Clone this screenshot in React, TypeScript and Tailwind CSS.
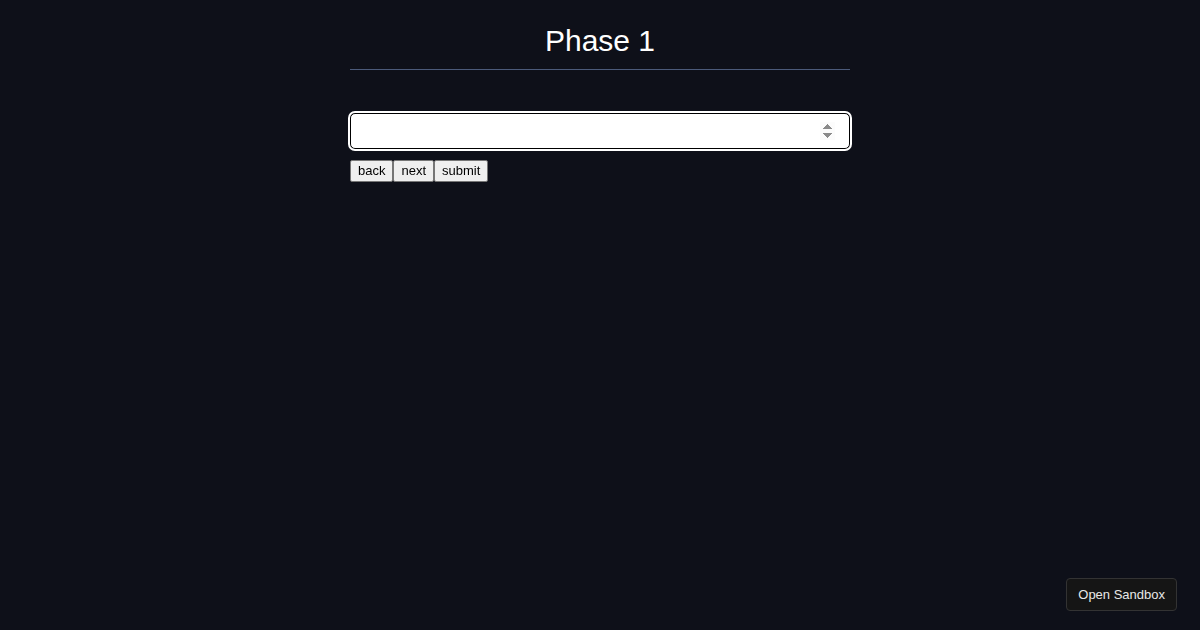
import { useState } from "react";

const STEPS = ["back", "next", "submit"];

export default function App() {
  const [value, setValue] = useState("");

  return (
    <div className="relative min-h-[630px] w-full bg-[#0e1019] font-['Liberation_Sans',Arial,sans-serif]">
      <div className="mx-auto flex w-[500px] flex-col">
        <h1 className="mt-[23px] border-b border-[#4b5a7a] pb-[10px] text-center text-[30px] leading-[36px] font-normal text-white">
          Phase 1
        </h1>

        <input
          type="number"
          autoFocus
          value={value}
          onChange={(e) => setValue(e.target.value)}
          className="mt-[43px] h-[36px] w-full rounded-[5px] border border-black bg-white px-[14px] text-[16px] text-black outline-2 outline-offset-0 outline-white"
        />

        <div className="mt-[11px] flex">
          {STEPS.map((label) => (
            <button
              key={label}
              className="h-[22px] rounded-[2px] border border-[#767676] bg-[#efefef] px-[7px] text-[13px] leading-[20px] text-black"
            >
              {label}
            </button>
          ))}
        </div>
      </div>

      <button className="absolute right-[23px] bottom-[19px] h-[33px] rounded-[4px] border border-[#333333] bg-[#151515] px-[11px] text-[13px] text-[#e8e8e8]">
        Open Sandbox
      </button>
    </div>
  );
}
